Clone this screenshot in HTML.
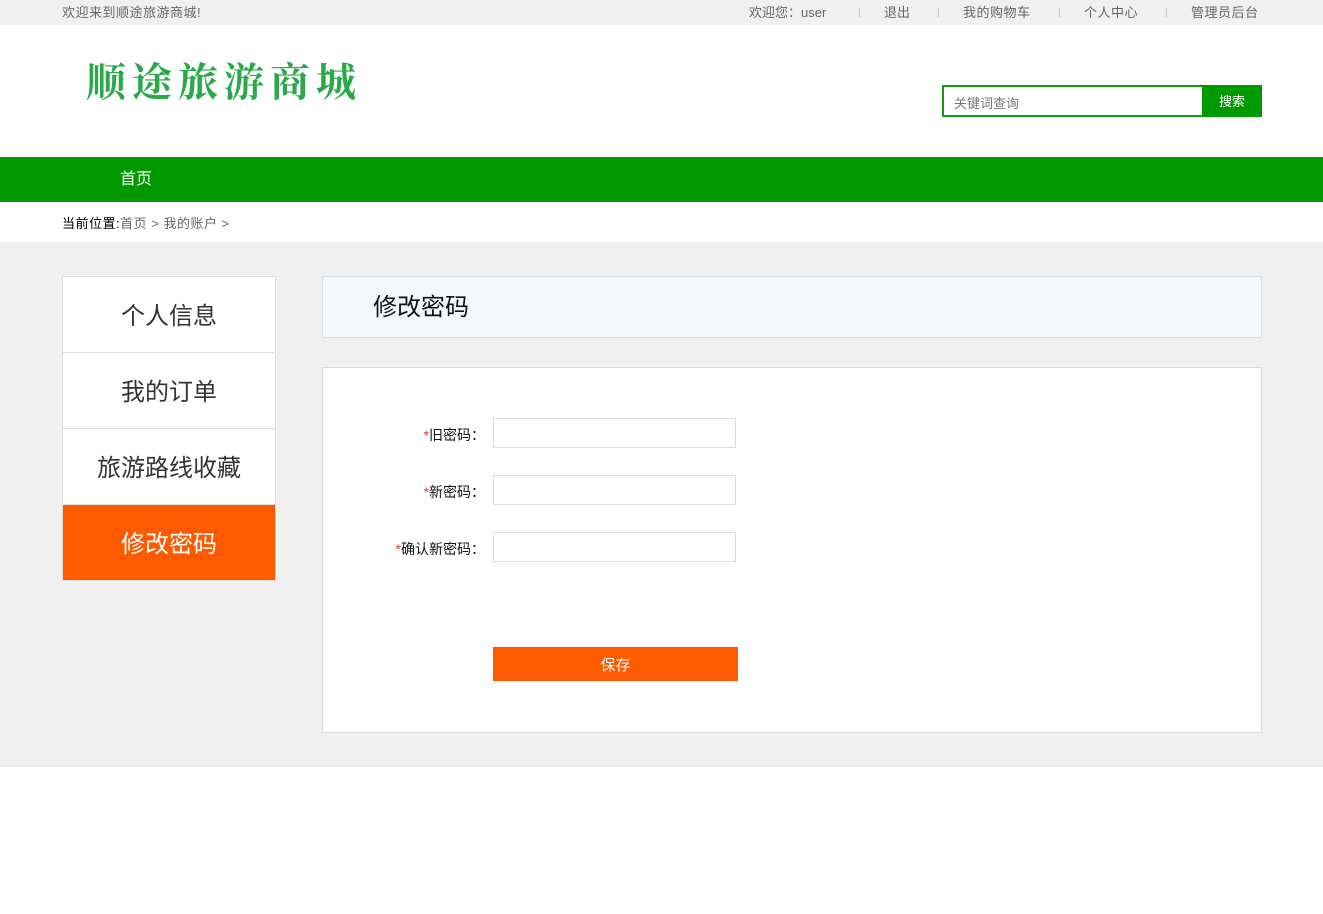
<!DOCTYPE html>
<html><head><meta charset="utf-8"><style>
*{margin:0;padding:0;box-sizing:border-box}
body{width:1323px;height:914px;background:#fff;font-family:"Liberation Sans","Noto Sans CJK SC",sans-serif;position:relative;overflow:hidden}
.abs{position:absolute}
.top{left:0;top:0;width:1323px;height:25px;background:#f0f0f0;font-size:13px;color:#666;line-height:25px}
.top .s{color:#bbb;font-size:10px}
.logo{left:86px;top:50px;font-family:"Noto Serif CJK SC",serif;font-size:40px;color:#2aa84a;letter-spacing:6px;font-weight:700;line-height:60px}
.search{left:942px;top:85px;width:320px;height:32px;border:2px solid #119911;background:#fff}
.search span{position:absolute;left:10px;top:6px;font-size:13px;color:#777}
.search b{position:absolute;right:-2px;top:-2px;width:60px;height:32px;background:#009900;color:#fff;font-size:13px;font-weight:normal;text-align:center;line-height:34px}
.nav{left:0;top:157px;width:1323px;height:45px;background:#009900;color:#fff;font-size:16px;line-height:46px}
.crumb{left:62px;top:213px;font-size:13px;color:#666;letter-spacing:0.5px}
.main{left:0;top:242px;width:1323px;height:525px;background:#f0f0f0;border-bottom:1px solid #e6e6e6}
.menu{left:62px;top:276px;width:214px;border:1px solid #ddd;background:#fff}
.menu div{height:76px;border-bottom:1px solid #ddd;text-align:center;line-height:80px;font-size:24px;color:#333}
.menu div.on{background:#ff5a00;color:#fff;border-bottom:none;height:75px}
.head{left:322px;top:276px;width:940px;height:62px;background:#f4f7fa;border:1px solid #ddd;font-size:24px;line-height:62px;padding-left:50px;color:#111}
.box{left:322px;top:367px;width:940px;height:366px;background:#fff;border:1px solid #ddd}
.lbl{font-size:14px;color:#111;text-align:right;width:120px}
.lbl i{color:#e33;font-style:normal}
.inp{width:243px;height:30px;border:1px solid #ddd;background:#fff}
.btn{left:493px;top:647px;width:245px;height:34px;background:#ff5a00;color:#fff;font-size:15px;text-align:center;line-height:37px}
</style></head><body>
<div class="abs top"><span class="abs" style="left:62px;letter-spacing:0.5px">欢迎来到顺途旅游商城!</span>
<span class="abs" style="left:749px">欢迎您：user</span>
<span class="abs s" style="left:858px">|</span>
<span class="abs" style="left:884px">退出</span>
<span class="abs s" style="left:937px">|</span>
<span class="abs" style="left:963px;letter-spacing:0.5px">我的购物车</span>
<span class="abs s" style="left:1058px">|</span>
<span class="abs" style="left:1084px;letter-spacing:0.5px">个人中心</span>
<span class="abs s" style="left:1165px">|</span>
<span class="abs" style="left:1191px;letter-spacing:0.5px">管理员后台</span></div>
<div class="abs logo">顺途旅游商城</div>
<div class="abs search"><span>关键词查询</span><b>搜索</b></div>
<div class="abs nav"><span class="abs" style="left:120px">首页</span></div>
<div class="abs crumb"><span style="color:#000">当前位置:</span>首页&nbsp;&gt;&nbsp;我的账户&nbsp;&gt;</div>
<div class="abs main"></div>
<div class="abs menu"><div>个人信息</div><div>我的订单</div><div>旅游路线收藏</div><div class="on">修改密码</div></div>
<div class="abs head">修改密码</div>
<div class="abs box"></div>
<div class="abs lbl" style="left:365px;top:425px"><i>*</i>旧密码：</div>
<div class="abs inp" style="left:493px;top:418px"></div>
<div class="abs lbl" style="left:365px;top:482px"><i>*</i>新密码：</div>
<div class="abs inp" style="left:493px;top:475px"></div>
<div class="abs lbl" style="left:365px;top:539px"><i>*</i>确认新密码：</div>
<div class="abs inp" style="left:493px;top:532px"></div>
<div class="abs btn">保存</div>
</body></html>
